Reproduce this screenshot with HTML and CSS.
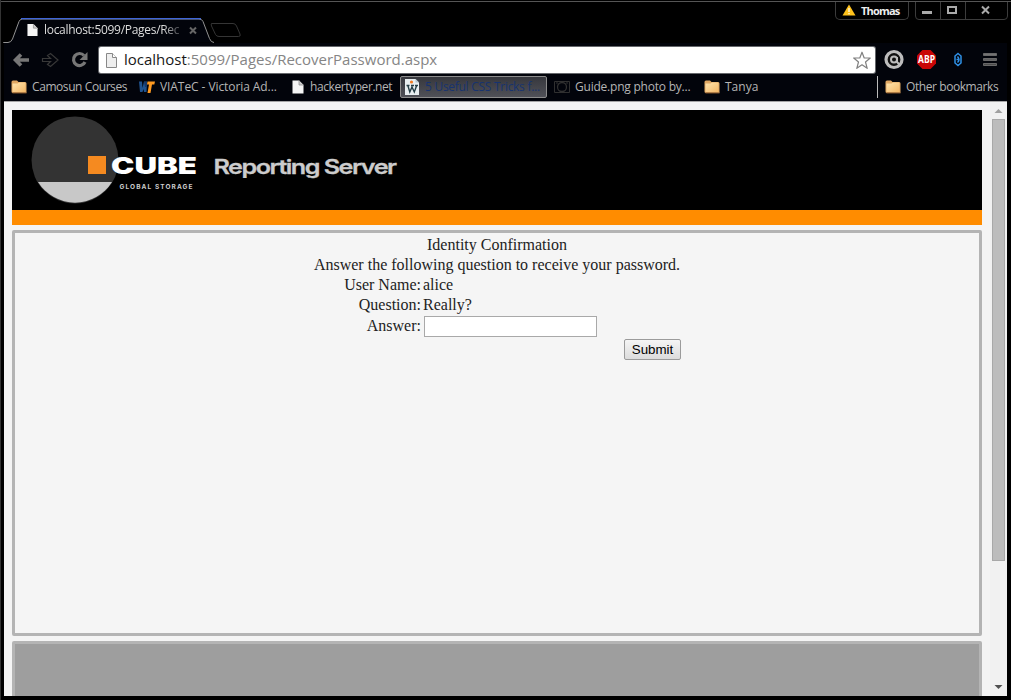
FILE: index.html
```html
<!DOCTYPE html>
<html lang="en">
<head>
<meta charset="utf-8">
<title>localhost:5099/Pages/RecoverPassword.aspx</title>
<link rel="stylesheet" href="styles.css">
</head>
<body>
<svg class="defs" width="0" height="0" aria-hidden="true">
  <defs>
    <linearGradient id="gold" x1="0" y1="0" x2="1" y2="1"><stop offset="0" stop-color="#ffe5af"/><stop offset="1" stop-color="#f4b866"/></linearGradient>
    <linearGradient id="bar" x1="0" y1="0" x2="0" y2="1"><stop offset="0" stop-color="#777"/><stop offset="1" stop-color="#484848"/></linearGradient>
    <symbol id="folder" viewBox="0 0 16 14"><path d="M.5 2Q.5 .5 2 .5H6L7.500 2H14Q15.500 2 15.500 3.500V13H2Q.5 13 .5 11.500z" fill="#e0a762"/><path d="M1.500 3.500H6.500L8 2.500H14.500V12H1.500z" fill="url(#gold)"/><path d="M1.500 13H15.500" stroke="#80532b"/></symbol>
    <symbol id="page" viewBox="0 0 12 14"><path d="M.5.5h6.500l4.500 4.500v8.500H.5z" fill="#f5f5f5"/><path d="M7 .5V5h4.500" fill="#ccc" stroke="#888" stroke-width=".7"/></symbol>
  </defs>
</svg>
<div class="browser">
  <header class="titlebar">
    <svg class="tabs" width="260" height="43" viewBox="0 0 260 43">
      <path d="M3.500 43.500V42.500H8Q11 42.500 12.500 39L19 21.500Q20 19 22.500 19H199Q202 19 203 21.500L209.500 38.500Q211 42.500 214 42.500" fill="#02040b" stroke="#929292"/>
      <path d="M21 18.700H201" stroke="#3f66d8" stroke-width="1.200"/>
      <path d="M211.500 23.500H233Q235.500 23.500 236.500 26L240 34Q241 36.500 238.500 36.500H219Q216.500 36.500 215.500 34.500L211.500 26Q210.500 23.500 212 23.500" fill="none" stroke="#353535"/>
      <use href="#page" x="27" y="23" width="11" height="14"/>
      <path d="M190 27.500l6 6M196 27.500L190 33.500" stroke="#666" stroke-width="2"/>
    </svg>
    <span class="tab-title">localhost:5099/Pages/Rec</span>
    <div class="profile">
      <svg width="14" height="12" viewBox="0 0 14 12"><path d="M7 .5l6.500 11H.5z" fill="#ffc21c"/><path d="M7 4v4M7 9v1.300" stroke="#fff" stroke-width="1.200"/></svg>
      <span>Thomas</span>
    </div>
    <svg class="controls" width="94" height="22" viewBox="0 0 94 22">
      <path d="M.5 2V16Q.5 19.500 4 19.500H89Q92.500 19.500 92.500 16V2M25.500 2V19M50.500 2V19" fill="none" stroke="#3c3c3c"/>
      <path d="M7 12.500h10" stroke="#aaa" stroke-width="3"/>
      <rect x="33" y="7" width="8" height="6" fill="none" stroke="#aaa" stroke-width="2"/>
      <path d="M67 6.500l7 7M74 6.500l-7 7" stroke="#aaa" stroke-width="2"/>
    </svg>
  </header>
  <div class="toolbar">
    <svg class="nav" width="92" height="33" viewBox="0 0 92 33">
      <path d="M21 11.500L15.500 17 21 22.500M16 17H29" fill="none" stroke="#777" stroke-width="3.600"/>
      <path d="M42.500 15.500H50.500L47.500 12.500 50.500 10.500 58 17 50.500 23.500 47.500 21.500 50.500 18.500H42.500z" fill="none" stroke="#383838" stroke-width="1.200"/>
      <path d="M84 12.500A6 6 0 1 0 85 19" fill="none" stroke="#777" stroke-width="3.200"/><path d="M87.500 9V17H79.500z" fill="#777"/>
    </svg>
    <div class="address">
      <svg width="11" height="15" viewBox="0 0 11 15"><path d="M.5.500H6.500L10.500 4.500V14.500H.5z" fill="#eee" stroke="#888"/><path d="M6.500.500V4.500H10.500" fill="#fff" stroke="#888"/></svg>
      <span class="url"><b>localhost</b>:5099/Pages/RecoverPassword.aspx</span>
      <svg class="star" width="20" height="19" viewBox="0 0 20 19"><path d="M10 1.200L12.200 7H18.300L13.500 11 15.200 17.300 10 13.800 4.800 17.300 6.500 11 1.700 7H7.800z" fill="#fff" stroke="#808080" stroke-width="1.200" stroke-linejoin="round"/></svg>
    </div>
    <svg width="128" height="33" viewBox="0 0 128 33">
      <circle cx="19" cy="16.500" r="8" fill="#111" stroke="#bdbdbd" stroke-width="3.200"/><circle cx="19" cy="16.500" r="3" fill="none" stroke="#bdbdbd" stroke-width="2"/><path d="M22 14V19L25 22" fill="none" stroke="#bdbdbd" stroke-width="2"/>
      <path d="M47.500 7h8l5.500 5.500v8L55.500 26h-8L42 20.500v-8z" fill="#c90606"/>
      <text x="43" y="20" class="abp" textLength="17" lengthAdjust="spacingAndGlyphs">ABP</text>
      <path d="M83 10.500L86 13V20L83 22.500 80 20V13zM82.500 13.500Q85.500 17 82.500 19.500M81.500 16.500H83.500" fill="none" stroke="#2f91e8" stroke-width="1.500"/>
      <path d="M108.500 10.500h13v2h-13zM108.500 15.500h13v2h-13zM108.500 20.500h13v2h-13z" fill="url(#bar)" stroke="#686868"/>
    </svg>
  </div>
  <nav class="bookmarks">
    <a class="bm camosun"><svg width="16" height="14"><use href="#folder"/></svg><span>Camosun Courses</span></a>
    <a class="bm viatec"><svg width="16" height="14" viewBox="0 0 16 14"><path d="M0 1.500H3L3.500 8 5 1.500H8L7.500 12H5L4.500 9 3.500 12H1z" fill="#1f538f"/><path d="M5 2h3v5H6z" fill="#173869"/><path d="M8.500 1.500H16l-.7 3h-2.300L11.500 13h-3l1.500-8.500H8z" fill="#ff9a20"/></svg><span>VIATeC - Victoria Ad...</span></a>
    <a class="bm hacker"><svg width="12" height="14"><use href="#page"/></svg><span>hackertyper.net</span></a>
    <a class="bm css-tricks"><svg width="14" height="16" viewBox="0 0 14 16"><path d="M0 0h10.500L14 3.500V16H0z" fill="#e8eef0"/><path d="M10.500 0v3.500H14" fill="#b6c5cc"/><circle cx="6.500" cy="3" r="1.600" fill="#f27b22"/><path d="M1.500 6.500h3M6 6.500h3M10 6.500h3M3 7l1.800 6L7 8l2.300 5L11.500 7" fill="none" stroke="#263f46" stroke-width="1.400"/></svg><span>5 Useful CSS Tricks f...</span></a>
    <a class="bm guide"><svg width="16" height="12" viewBox="0 0 16 12"><path d="M.5.500h15v11H.5z" fill="none" stroke="#303030"/><circle cx="8" cy="6" r="4.500" fill="none" stroke="#303030" stroke-width="1.300"/><path d="M2 2h2M12 2h2" stroke="#303030"/></svg><span>Guide.png photo by...</span></a>
    <a class="bm tanya"><svg width="16" height="14"><use href="#folder"/></svg><span>Tanya</span></a>
    <a class="bm other"><svg width="16" height="14"><use href="#folder"/></svg><span>Other bookmarks</span></a>
  </nav>
  <div class="viewport">
    <div class="page">
      <div class="banner">
        <svg width="400" height="100" viewBox="0 0 400 100">
          <circle cx="63" cy="50" r="43.500" fill="#333"/>
          <path d="M26 72H100A43.500 43.500 0 0 1 26 72z" fill="#c8c8c8"/>
          <rect x="76" y="46" width="18" height="18" fill="#f58a20"/>
          <text x="99" y="63.500" class="cube" textLength="86" lengthAdjust="spacingAndGlyphs">CUBE</text>
          <text x="107.500" y="79" class="storage" textLength="73">GLOBAL STORAGE</text>
          <text x="201.500" y="64" class="server" textLength="182" lengthAdjust="spacingAndGlyphs">Reporting Server</text>
        </svg>
      </div>
      <main class="panel">
        <form class="recover">
          <p class="wide">Identity Confirmation</p>
          <p class="wide">Answer the following question to receive your password.</p>
          <span class="label">User Name:</span><span>alice</span>
          <span class="label">Question:</span><span>Really?</span>
          <label class="label answer" for="answer">Answer:</label><input id="answer" class="field" type="text">
          <button class="submit" type="button">Submit</button>
        </form>
      </main>
      <footer class="footer"></footer>
    </div>
    <div class="scrollbar">
      <svg width="17" height="17" viewBox="0 0 17 17"><path d="M4.500 11L8.500 7l4 4z" fill="#a0a0a0"/></svg>
      <div class="thumb"></div>
      <svg class="down" width="17" height="17" viewBox="0 0 17 17"><path d="M4.500 6h8l-4 4z" fill="#505050"/></svg>
    </div>
  </div>
</div>
</body>
</html>
```
FILE: styles.css
```css
* { box-sizing: border-box; }
body { margin: 0; background: #000; overflow: hidden; }
svg { display: block; flex: none; }
.defs { position: absolute; }
.browser { width: 1011px; height: 700px; background: #000; display: flex; flex-direction: column; border-left: 1px solid #333; font-family: "Open Sans", "Noto Sans", sans-serif; }
.titlebar { height: 43px; flex: none; display: flex; align-items: flex-start; border-top: 1px solid #000; box-shadow: inset 0 1px #555; position: relative; }
.tabs { margin: -1px 0 0 -1px; }
.tab-title { position: absolute; left: 43px; top: 20px; white-space: nowrap; color: #ddd; font-size: 12px; line-height: 17px; letter-spacing: -.3px; -webkit-mask-image: linear-gradient(90deg, #000 88%, rgba(0,0,0,.3)); mask-image: linear-gradient(90deg, #000 88%, rgba(0,0,0,.3)); }
.profile { margin-left: 575px; margin-top: 1px; width: 74px; height: 18px; border: 1px solid #3c3c3c; border-top: 0; border-radius: 0 0 5px 5px; display: flex; gap: 5px; padding: 2px 0 0 6px; color: #eee; font-size: 11px; font-weight: 700; line-height: 14px; letter-spacing: -.8px; }
.controls { margin: -1px 0 0 6px; }
.toolbar { height: 33px; flex: none; display: flex; background: #02040b; margin: 0 4px 0 3px; }
.nav { margin-left: -4px; margin-right: 7px; }
.address { width: 776px; height: 26px; margin-top: 4px; background: #fff; border-radius: 2px; display: flex; align-items: center; padding: 0 3px 0 7px; box-shadow: 0 0 0 1px #65676b; }
.url { margin: -2px 0 0 7px; flex: 1; font-size: 15px; line-height: 24px; color: #858585; white-space: nowrap; }
.url b { font-weight: 400; color: #171717; }
.abp { font: 700 10px "Open Sans", sans-serif; fill: #fff; }
.bookmarks { height: 26px; flex: none; display: flex; align-items: center; background: #02040b; margin: 0 4px 0 3px; padding: 0 0 3px 7px; border-bottom: 1px solid #a5a5a5; color: #b5b5b5; font-size: 12px; line-height: 18px; white-space: nowrap; }
.bm { display: flex; align-items: center; gap: 5px; flex: none; }
.camosun { width: 128px; letter-spacing: -.42px; }
.viatec { width: 153px; letter-spacing: -.08px; }
.hacker { width: 108px; gap: 6px; letter-spacing: -.42px; }
.css-tricks { width: 147px; height: 22px; border: 1px solid #8c8c8c; border-radius: 2px; padding-left: 4px; gap: 6px; color: #17336f; background: linear-gradient(#36373d, #505158); letter-spacing: -.28px; }
.guide { width: 150px; margin-left: 7px; letter-spacing: -.22px; }
.tanya { width: 173px; }
.other { border-left: 1px solid #bbb; height: 22px; padding-left: 7px; letter-spacing: -.42px; }
.viewport { height: 594px; flex: none; margin: 0 4px 0 3px; background: #f4f4f4; display: flex; overflow: hidden; }
.page { width: 986px; padding: 8px 8px 0; font-family: "Liberation Serif", serif; font-size: 16px; color: #222; }
.banner { height: 115px; background: #000; border-bottom: 15px solid #ff8c00; }
.cube { font: 900 23px Inter, sans-serif; fill: #fff; }
.storage { font: 700 6.5px Inter, sans-serif; fill: #ccc; }
.server { font: 600 20px Inter, sans-serif; letter-spacing: -1.2px; fill: #ccc; stroke: #ccc; stroke-width: .3px; }
.panel { height: 406px; margin-top: 5px; border: 3px solid #b4b4b4; border-radius: 2px; background: #f5f5f5; padding-top: 2px; }
.recover { width: 368px; margin: 0 auto; display: grid; grid-template-columns: 108px 1fr; grid-template-rows: 20px 20px 20px 20px 23px 23px; line-height: 20px; column-gap: 2px; }
.wide { grid-column: 1 / 3; margin: 0; text-align: center; white-space: nowrap; }
.label { text-align: right; }
.answer { line-height: 22px; }
.field { width: 173px; height: 21px; margin: 1px 0 0 1px; border: 1px solid #a9a9a9; background: #fff; padding: 1px; }
.submit { grid-column: 2; justify-self: end; width: 57px; height: 21px; margin-top: 1px; padding: 0; border: 1px solid #9b9b9b; border-radius: 2px; background: linear-gradient(#f5f5f5, #dcdcdc); font: 13.333px "Liberation Sans", sans-serif; color: #000; }
.footer { height: 80px; margin-top: 5px; background: #9e9e9e; border: 3px solid #b4b4b4; border-radius: 2px; }
.scrollbar { width: 17px; background: #f1f1f1; display: flex; flex-direction: column; }
.thumb { height: 442px; width: 13px; margin-left: 2px; background: #bcbcbc; border: 1px solid #a8a8a8; flex: none; }
.down { margin-top: auto; }
```
